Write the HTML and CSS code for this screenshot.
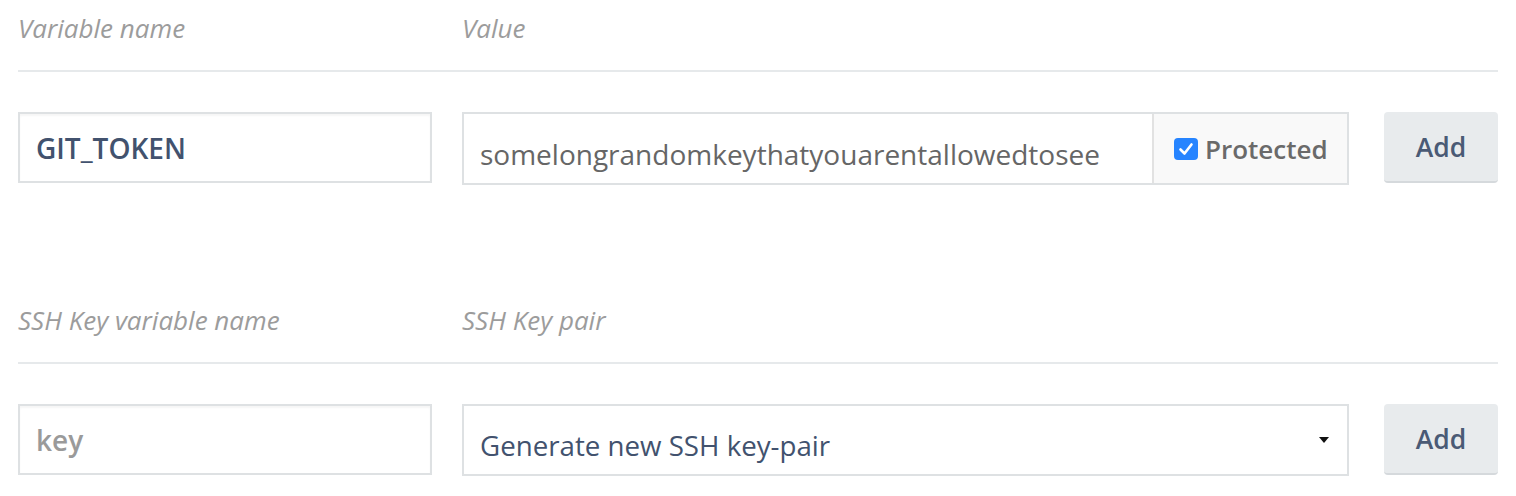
FILE: index.html
```html
<!DOCTYPE html>
<html>
<head>
<meta charset="utf-8">
<link rel="stylesheet" href="styles.css">
</head>
<body>
<div class="page">
  <section class="block">
    <div class="header grid">
      <div class="label">Variable name</div>
      <div class="label">Value</div>
      <div></div>
    </div>
    <div class="row grid">
      <div class="input name">GIT_TOKEN</div>
      <div class="group">
        <div class="input value">somelongrandomkeythatyouarentallowedtosee</div>
        <div class="addon">
          <span class="check"><svg width="24" height="22" viewBox="0 0 24 22"><rect x="0" y="0" width="24" height="22" rx="4" fill="#2684ff"/><path d="M6.5 11.5 L10.5 15.5 L17.5 6.5" fill="none" stroke="#fff" stroke-width="2.6" stroke-linecap="round" stroke-linejoin="round"/></svg></span>
          <span class="addon-text">Protected</span>
        </div>
      </div>
      <button class="btn">Add</button>
    </div>
  </section>
  <section class="block">
    <div class="header grid">
      <div class="label">SSH Key variable name</div>
      <div class="label">SSH Key pair</div>
      <div></div>
    </div>
    <div class="row grid">
      <div class="input name placeholder">key</div>
      <div class="select">
        <span class="select-text">Generate new SSH key-pair</span>
        <span class="caret"></span>
      </div>
      <button class="btn">Add</button>
    </div>
  </section>
</div>
</body>
</html>
```

FILE: styles.css
```css
* { box-sizing: border-box; }
html, body { margin: 0; padding: 0; background: #fff; }
body { font-family: "Open Sans", "Liberation Sans", sans-serif; }
.page {
  padding: 10px 18px 0 18px;
  display: flex;
  flex-direction: column;
  gap: 117px;
}
.grid {
  display: grid;
  grid-template-columns: 414px 887px 1fr;
  column-gap: 30px;
}
.header {
  height: 62px;
  border-bottom: 2px solid #e6e9eb;
}
.label {
  font-style: italic;
  font-size: 26px;
  line-height: 36px;
  color: #9c9c9c;
}
.row { margin-top: 40px; align-items: start; }
.input {
  height: 71px;
  border: 2px solid #dee1e3;
  box-shadow: inset 0 2px 2px rgba(0,0,0,0.04);
  padding: 0 16px;
  display: flex;
  align-items: center;
  font-size: 28px;
  background: #fff;
}
.name { color: #42526e; font-weight: 600; }
.placeholder { color: #9a9a9a; }
.group {
  display: flex;
  height: 73px;
  border: 2px solid #dee1e3;
}
.group .input.value {
  flex: 1;
  border: none;
  box-shadow: none;
  height: 100%;
  color: #666;
  font-weight: 400;
  padding-top: 10px;
}
.addon {
  width: 195px;
  border-left: 2px solid #e2e2e2;
  background: #f9f9f9;
  display: flex;
  align-items: center;
  padding-left: 20px;
  gap: 7px;
}
.check { display: flex; }
.addon-text { font-size: 26px; font-weight: 600; color: #6a6a6a; }
.select {
  height: 72px;
  border: 2px solid #dee1e3;
  display: flex;
  align-items: center;
  padding: 10px 18px 0 16px;
}
.select-text { flex: 1; font-size: 27.7px; color: #42526e; }
.caret {
  width: 0; height: 0;
  border-left: 5.5px solid transparent;
  border-right: 5.5px solid transparent;
  border-top: 6px solid #111;
  margin-top: -10px;
}
.btn {
  justify-self: end;
  width: 114px;
  height: 71px;
  border: none;
  border-bottom: 2px solid #d5d9dc;
  border-radius: 4px;
  background: #e8ebed;
  color: #4a5a75;
  font-family: "Open Sans", "Liberation Sans", sans-serif;
  font-size: 26.5px;
  font-weight: 600;
  padding: 0;
}
```
